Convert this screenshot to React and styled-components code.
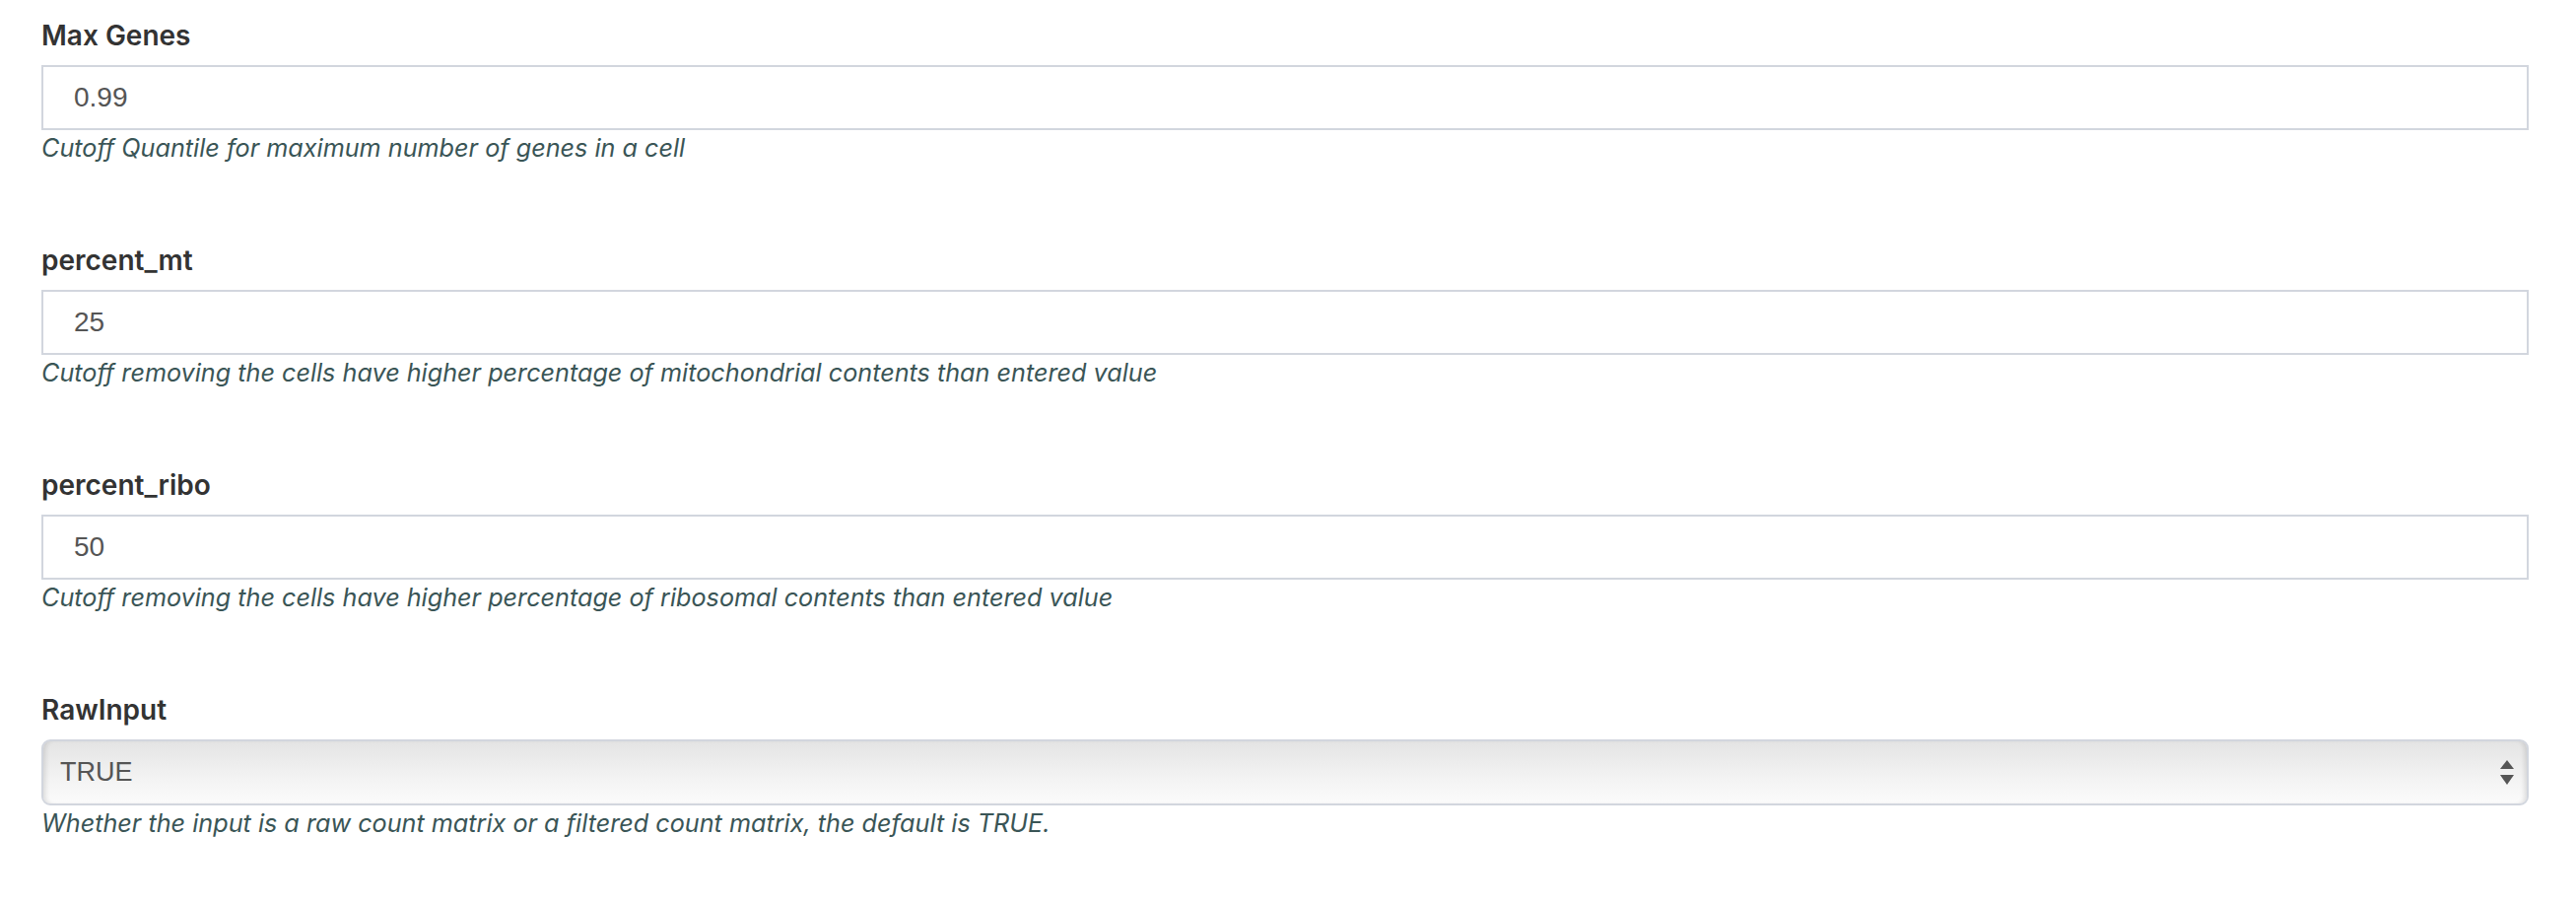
import React from "react";
import styled, { createGlobalStyle } from "styled-components";

const fields = [
  {
    id: "max_genes",
    label: "Max Genes",
    value: "0.99",
    help: "Cutoff Quantile for maximum number of genes in a cell",
  },
  {
    id: "percent_mt",
    label: "percent_mt",
    value: "25",
    help: "Cutoff removing the cells have higher percentage of mitochondrial contents than entered value",
  },
  {
    id: "percent_ribo",
    label: "percent_ribo",
    value: "50",
    help: "Cutoff removing the cells have higher percentage of ribosomal contents than entered value",
  },
];

const GlobalStyle = createGlobalStyle`
  html, body {
    margin: 0;
    padding: 0;
    background: #fff;
  }
  body {
    font-family: Inter, "Noto Sans", sans-serif;
  }
`;

const Form = styled.div`
  padding: 18px 48px 0 42px;
`;

const Group = styled.div`
  margin-bottom: 78px;
`;

const Label = styled.label`
  display: block;
  font-size: 28px;
  line-height: 36px;
  font-weight: 600;
  color: #333;
  margin-bottom: 12px;
`;

const TextInput = styled.input`
  display: block;
  box-sizing: border-box;
  width: 100%;
  height: 66px;
  padding: 0 31px;
  border: 2px solid #d2d6de;
  border-radius: 0;
  background: #fff;
  font-family: "Liberation Sans", Arial, sans-serif;
  font-size: 28px;
  color: #555;
  outline: none;
`;

const SelectBox = styled.div`
  position: relative;
  box-sizing: border-box;
  height: 67px;
  border: 2px solid #d2d6de;
  border-radius: 9px;
  background: linear-gradient(#e4e4e4, #f3f3f3 60%, #fbfbfb);
  box-shadow: inset 5px 0 5px -3px rgba(0, 0, 0, 0.12),
    inset -5px 0 5px -3px rgba(0, 0, 0, 0.12);
  display: flex;
  align-items: center;
  padding: 0 17px;
  font-family: "Liberation Sans", Arial, sans-serif;
  font-size: 27px;
  color: #555;
`;

const Arrows = styled.svg`
  position: absolute;
  right: 13px;
  top: 50%;
  transform: translateY(-50%);
`;

const Help = styled.span`
  display: block;
  font-size: 25.2px;
  line-height: 36px;
  font-style: italic;
  color: #3a5556;
`;

const App = () => (
  <>
    <GlobalStyle />
    <Form>
      {fields.map((f) => (
        <Group key={f.id}>
          <Label htmlFor={f.id}>{f.label}</Label>
          <TextInput id={f.id} type="text" defaultValue={f.value} />
          <Help>{f.help}</Help>
        </Group>
      ))}
      <Group>
        <Label>RawInput</Label>
        <SelectBox>
          TRUE
          <Arrows width="14" height="26" viewBox="0 0 14 26">
            <polygon points="7,0 14,9 0,9" fill="#555" />
            <polygon points="0,15 14,15 7,25" fill="#555" />
          </Arrows>
        </SelectBox>
        <Help>
          Whether the input is a raw count matrix or a filtered count matrix,
          the default is TRUE.
        </Help>
      </Group>
    </Form>
  </>
);

export default App;
